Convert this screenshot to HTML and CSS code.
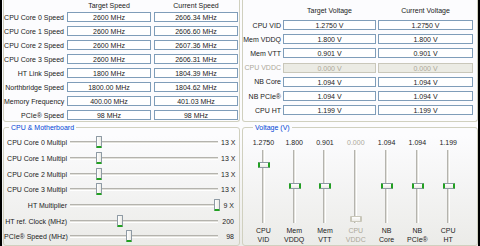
FILE: index.html
```html
<!DOCTYPE html>
<html lang="en">
<head>
    <meta charset="UTF-8">
    <title>Overclock Panel</title>
    <link rel="stylesheet" href="styles.css">
</head>
<body>
    <div class="frame">
        <div class="panel speeds">
            <span></span><span class="head">Target Speed</span><span class="head">Current Speed</span>
            <span class="lbl">CPU Core 0 Speed</span><span class="box">2600 MHz</span><span class="box">2606.34 MHz</span>
            <span class="lbl">CPU Core 1 Speed</span><span class="box">2600 MHz</span><span class="box">2606.60 MHz</span>
            <span class="lbl">CPU Core 2 Speed</span><span class="box">2600 MHz</span><span class="box">2607.36 MHz</span>
            <span class="lbl">CPU Core 3 Speed</span><span class="box">2600 MHz</span><span class="box">2606.31 MHz</span>
            <span class="lbl">HT Link Speed</span><span class="box">1800 MHz</span><span class="box">1804.39 MHz</span>
            <span class="lbl">Northbridge Speed</span><span class="box">1800.00 MHz</span><span class="box">1804.62 MHz</span>
            <span class="lbl">Memory Frequency</span><span class="box">400.00 MHz</span><span class="box">401.03 MHz</span>
            <span class="lbl">PCIe&reg; Speed</span><span class="box">98 MHz</span><span class="box">98 MHz</span>
        </div>

        <div class="panel volts">
            <span></span><span class="head">Target Voltage</span><span class="head">Current Voltage</span>
            <span class="lbl">CPU VID</span><span class="box">1.2750 V</span><span class="box">1.2750 V</span>
            <span class="lbl">Mem VDDQ</span><span class="box">1.800 V</span><span class="box">1.800 V</span>
            <span class="lbl">Mem VTT</span><span class="box">0.901 V</span><span class="box">0.901 V</span>
            <span class="lbl off">CPU VDDC</span><span class="box off">0.000 V</span><span class="box off">0.000 V</span>
            <span class="lbl">NB Core</span><span class="box">1.094 V</span><span class="box">1.094 V</span>
            <span class="lbl">NB PCIe&reg;</span><span class="box">1.094 V</span><span class="box">1.094 V</span>
            <span class="lbl">CPU HT</span><span class="box">1.199 V</span><span class="box">1.199 V</span>
        </div>

        <fieldset class="group cpu">
            <legend>CPU &amp; Motherboard</legend>
            <div class="slide">
                <span class="lbl">CPU Core 0 Multipl</span>
                <span class="track"><i class="thumb" style="left: 26px"></i></span>
                <span class="val">13 X</span>
            </div>
            <div class="slide">
                <span class="lbl">CPU Core 1 Multipl</span>
                <span class="track"><i class="thumb" style="left: 26px"></i></span>
                <span class="val">13 X</span>
            </div>
            <div class="slide">
                <span class="lbl">CPU Core 2 Multipl</span>
                <span class="track"><i class="thumb" style="left: 26px"></i></span>
                <span class="val">13 X</span>
            </div>
            <div class="slide">
                <span class="lbl">CPU Core 3 Multipl</span>
                <span class="track"><i class="thumb" style="left: 26px"></i></span>
                <span class="val">13 X</span>
            </div>
            <div class="slide">
                <span class="lbl">HT Multiplier</span>
                <span class="track"><i class="thumb" style="left: 144px"></i></span>
                <span class="val">9 X</span>
            </div>
            <div class="slide">
                <span class="lbl">HT ref. Clock (MHz)</span>
                <span class="track"><i class="thumb" style="left: 47px"></i></span>
                <span class="val">200</span>
            </div>
            <div class="slide">
                <span class="lbl">PCIe&reg; Speed (MHz)</span>
                <span class="track"><i class="thumb" style="left: 56px"></i></span>
                <span class="val">98</span>
            </div>
        </fieldset>

        <fieldset class="group vgroup">
            <legend>Voltage (V)</legend>
            <div class="vcol">
                <span class="val">1.2750</span>
                <span class="vtrack"><i class="vthumb" style="top: 12px"></i></span>
                <span class="lbl">CPU<br>VID</span>
            </div>
            <div class="vcol">
                <span class="val">1.800</span>
                <span class="vtrack"><i class="vthumb" style="top: 33px"></i></span>
                <span class="lbl">Mem<br>VDDQ</span>
            </div>
            <div class="vcol">
                <span class="val">0.901</span>
                <span class="vtrack"><i class="vthumb" style="top: 33px"></i></span>
                <span class="lbl">Mem<br>VTT</span>
            </div>
            <div class="vcol off">
                <span class="val">0.000</span>
                <span class="vtrack"><i class="vthumb" style="top: 66px"></i></span>
                <span class="lbl">CPU<br>VDDC</span>
            </div>
            <div class="vcol">
                <span class="val">1.094</span>
                <span class="vtrack"><i class="vthumb" style="top: 33px"></i></span>
                <span class="lbl">NB<br>Core</span>
            </div>
            <div class="vcol">
                <span class="val">1.094</span>
                <span class="vtrack"><i class="vthumb" style="top: 33px"></i></span>
                <span class="lbl">NB<br>PCIe&reg;</span>
            </div>
            <div class="vcol">
                <span class="val">1.199</span>
                <span class="vtrack"><i class="vthumb" style="top: 33px"></i></span>
                <span class="lbl">CPU<br>HT</span>
            </div>
        </fieldset>
    </div>
</body>
</html>
```

FILE: styles.css
```css
body {
    margin: 0;
    background: #000;
    font-family: 'Liberation Sans', Arial, sans-serif;
    font-size: 7px;
    color: #222;
}

.frame {
    margin-left: 2px;
    width: 476px;
    height: 246px;
    overflow: hidden;
    background: linear-gradient(to bottom, #fcfcfe 0%, #fcfcfe 55%, #ebebe8 100%);
    display: grid;
    grid-template-columns: 237px 236px;
    grid-template-rows: 122px 124px;
    column-gap: 2px;
    padding-left: 1px;
    box-sizing: border-box;
}

/* top group boxes */
.panel {
    display: grid;
    align-items: center;
    border: 1px solid #d0d0bf;
    border-top: none;
    border-radius: 0 0 3px 3px;
    box-sizing: border-box;
}

.speeds {
    grid-template-columns: 60px 84px 84px;
    grid-template-rows: 10px repeat(8, 14px);
    column-gap: 3px;
}

.volts {
    grid-template-columns: 38px 93px 95px;
    grid-template-rows: 16px repeat(7, 14.2px);
    column-gap: 2px;
    padding-top: 2px;
}

.head {
    text-align: center;
}

.lbl {
    text-align: right;
    white-space: nowrap;
}

.box {
    height: 10px;
    line-height: 9px;
    border: 1px solid #7f9db9;
    background: #fff;
    text-align: center;
    white-space: nowrap;
    box-sizing: border-box;
}

.box.off {
    background: #ebebe4;
    border-color: #c9c7ba;
}

.off {
    color: #aca899;
}

/* bottom group boxes */
.group {
    margin: 0;
    margin-top: 2px;
    border: 1px solid #d0d0bf;
    border-radius: 3px;
    padding: 0;
    min-width: 0;
}

.group legend {
    color: #0046d5;
    padding: 0 2px;
    margin-left: 5px;
}

.cpu {
    display: flex;
    flex-direction: column;
    padding-top: 4px;
}

.slide {
    display: flex;
    align-items: center;
    height: 15.7px;
}

.slide .lbl {
    width: 63px;
    flex: none;
}

.track {
    position: relative;
    flex: none;
    width: 148px;
    height: 1px;
    margin-left: 3px;
    border-top: 1px solid #b4b3ad;
    background: #e2e1dc;
    border-bottom: 1px solid #fff;
}

.thumb {
    position: absolute;
    top: -6px;
    width: 6px;
    height: 12px;
    box-sizing: border-box;
    border: 1px solid #8e9aa4;
    border-bottom: 2px solid #21a121;
    border-radius: 1px;
    background: linear-gradient(to right, #fff, #ecebe6);
}

.slide .val {
    width: 13px;
    margin-left: 3px;
    text-align: right;
    white-space: nowrap;
}

.vgroup {
    display: flex;
    padding: 7px 0 0 5px;
}

.vcol {
    width: 30.8px;
    display: flex;
    flex-direction: column;
    align-items: center;
    text-align: center;
}

.vcol .val {
    height: 10px;
    line-height: 10px;
}

.vtrack {
    position: relative;
    width: 1px;
    height: 73px;
    margin: 2px 0 3px;
    border-left: 1px solid #b4b3ad;
    background: #e2e1dc;
    border-right: 1px solid #fff;
}

.vthumb {
    position: absolute;
    left: -5px;
    width: 12px;
    height: 6px;
    box-sizing: border-box;
    border: 1px solid #8e9aa4;
    border-left: 2px solid #21a121;
    border-right: 2px solid #21a121;
    border-radius: 1px;
    background: linear-gradient(to bottom, #fff, #ecebe6);
}

.vcol.off .vthumb {
    border-color: #c9c7ba;
}

.vcol .lbl {
    text-align: center;
    line-height: 9px;
}
```
